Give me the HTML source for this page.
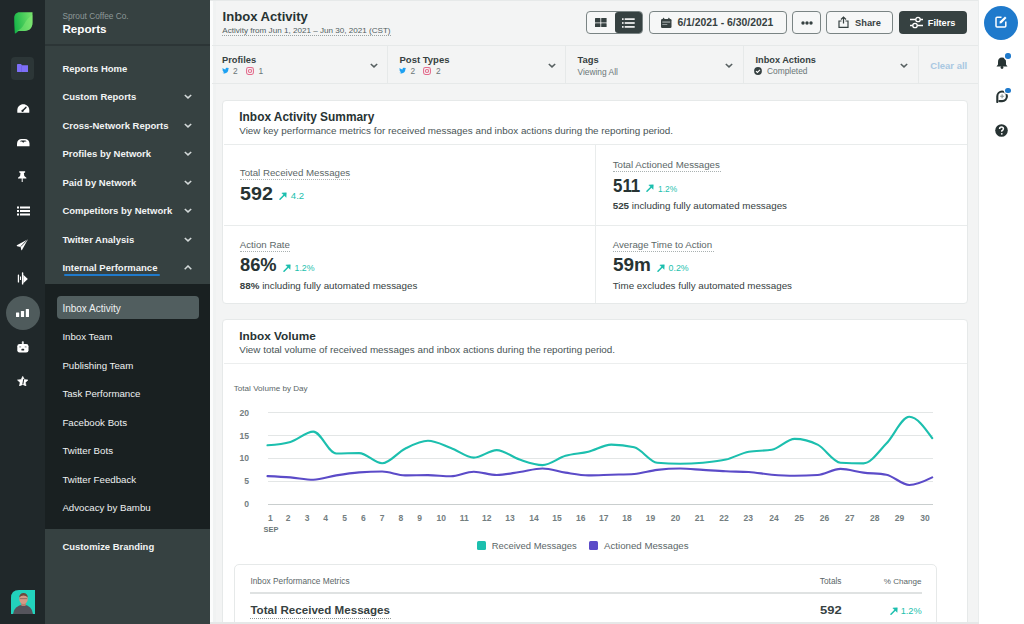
<!DOCTYPE html>
<html><head><meta charset="utf-8"><title>Inbox Activity</title>
<style>
html,body{margin:0;padding:0;width:1024px;height:624px;overflow:hidden;background:#f3f4f4;}
body{position:relative;font-family:"Liberation Sans",sans-serif;}
.t{position:absolute;white-space:nowrap;}
.b{position:absolute;}
b{font-weight:700;}
</style></head><body>
<div class="b" style="left:0px;top:0px;width:45px;height:624px;background:#20282a;"></div>
<div class="b" style="left:45px;top:0px;width:165px;height:624px;background:#364141;"></div>
<div class="b" style="left:45px;top:44px;width:165px;height:1.5px;background:#2c3536;"></div>
<div class="b" style="left:45px;top:284px;width:165px;height:245px;background:#192021;"></div>
<div class="b" style="left:210px;top:0px;width:768px;height:624px;background:#f3f4f4;"></div>
<div class="b" style="left:210px;top:0px;width:2.5px;height:624px;background:#fbfcfc;"></div>
<div class="b" style="left:212.5px;top:0px;width:3.5px;height:624px;background:#f0f2f2;"></div>
<div class="b" style="left:210px;top:0px;width:768px;height:1px;background:#e6e9e9;"></div>
<div class="b" style="left:978px;top:0px;width:46px;height:624px;background:#ffffff;"></div>
<div class="b" style="left:978px;top:0px;width:1px;height:624px;background:#eaeded;"></div>
<svg class="b" style="left:13.5px;top:11.5px;" width="19" height="22" viewBox="0 0 19 22"><defs><linearGradient id="lg" x1="0" y1="0.6" x2="1" y2="0.4"><stop offset="0" stop-color="#16b548"/><stop offset="1" stop-color="#72e06a"/></linearGradient></defs><path d="M0.9 21.6 C0.5 17 0.2 11 0.2 6 C0.2 2.6 2.3 0.3 5.5 0.3 L18.5 0.3 L18.5 10.5 C18.5 15.8 15.5 18.9 10.5 18.9 L4.5 18.9 C3.5 19.8 2.2 21 0.9 21.6 Z" fill="url(#lg)"/><path d="M3 18.9 C8 17 9.5 13 12 9 C14 6 16.5 4 18.5 3 L18.5 10.5 C18.5 15.8 15.5 18.9 10.5 18.9 Z" fill="#8aea78" opacity="0.45"/></svg>
<div class="b" style="left:11.2px;top:57.3px;width:22.500000000000004px;height:22.400000000000006px;background:#2c3637;border-radius:4px;"></div>
<svg class="b" style="left:16.8px;top:63.8px;" width="11.6" height="8.2" viewBox="0 0 11.6 8.2"><path d="M0 0.8 Q0 0 0.8 0 L4 0 L5 1.2 L10.8 1.2 Q11.6 1.2 11.6 2 L11.6 7.4 Q11.6 8.2 10.8 8.2 L0.8 8.2 Q0 8.2 0 7.4 Z" fill="#7d6ff7"/><rect x="4" y="1.6" width="0.7" height="6.6" fill="#5e52d0" opacity="0.5"/></svg>
<svg class="b" style="left:16.5px;top:103.5px;" width="13" height="9" viewBox="0 0 13 9"><path d="M0.3 8.4 L0.3 6.2 C0.3 2.6 3 0.2 6.3 0.2 C9.6 0.2 12.3 2.6 12.3 6.2 L12.3 8.4 Q12.3 8.8 11.9 8.8 L0.7 8.8 Q0.3 8.8 0.3 8.4 Z" fill="#fff"/><path d="M5.6 6.8 L8.9 3.4" stroke="#20282a" stroke-width="1.5" stroke-linecap="round"/><circle cx="5.5" cy="6.9" r="1.1" fill="#20282a"/></svg>
<svg class="b" style="left:16.5px;top:138.5px;" width="13" height="8" viewBox="0 0 13 8"><path d="M0 7.3 L0 4.6 C0 1.8 2 0 4.6 0 L7.9 0 C10.5 0 12.5 1.8 12.5 4.6 L12.5 7.3 Z" fill="#fff"/><path d="M3 2.6 C3.4 1.6 4 1.4 4.8 1.4 L7.7 1.4 C8.5 1.4 9.1 1.6 9.5 2.6 L7.6 2.6 L6.25 3.7 L4.9 2.6 Z" fill="#20282a"/></svg>
<svg class="b" style="left:18.3px;top:170.6px;" width="8.4" height="11.6" viewBox="0 0 10 13"><path d="M1.5 0 L8.5 0 L8.5 1.5 L7 2 L7.5 5.5 L10 7.5 L10 8.5 L0 8.5 L0 7.5 L2.5 5.5 L3 2 L1.5 1.5 Z" fill="#fff"/><rect x="4.4" y="8" width="1.2" height="5" fill="#fff"/></svg>
<svg class="b" style="left:16.5px;top:205.5px;" width="13" height="10" viewBox="0 0 13 10"><g fill="#fff"><rect x="0" y="0.5" width="2" height="2"/><rect x="3" y="0.5" width="10" height="2"/><rect x="0" y="4" width="2" height="2"/><rect x="3" y="4" width="10" height="2"/><rect x="0" y="7.5" width="2" height="2"/><rect x="3" y="7.5" width="10" height="2"/></g></svg>
<svg class="b" style="left:16px;top:237px;" width="13" height="14" viewBox="0 0 13 14"><path d="M12 2.2 L0.8 8.3 Q0.5 9 1.2 9.2 L4.6 9.9 L5.3 13 Q5.5 13.6 6 13 Z" fill="#fff"/><path d="M12 2.2 L4.8 9.6" stroke="#20282a" stroke-width="0.8"/></svg>
<svg class="b" style="left:17px;top:271px;" width="12" height="14" viewBox="0 0 12 14"><g fill="#fff"><rect x="0.8" y="3.4" width="1.3" height="8.1" rx="0.6"/><rect x="3" y="5.5" width="1" height="3.5"/><rect x="4.9" y="1.3" width="1.4" height="12.3" rx="0.6"/><path d="M6.3 3.8 L10.8 8 L6.3 12.2 Z"/></g></svg>
<div class="b" style="left:6px;top:296px;width:34px;height:34px;background:#4f5b5c;border-radius:50%;"></div>
<svg class="b" style="left:16px;top:309px;" width="13" height="8" viewBox="0 0 13 8"><g fill="#fff"><rect x="0" y="3.5" width="3.2" height="4.5" rx="0.5"/><rect x="4.9" y="2" width="3.2" height="6" rx="0.5"/><rect x="9.8" y="0" width="3.2" height="8" rx="0.5"/></g></svg>
<svg class="b" style="left:16px;top:340px;" width="13" height="14" viewBox="0 0 13 14"><rect x="5.8" y="1.2" width="2" height="3.2" rx="0.8" fill="#dfe3e3"/><rect x="1.3" y="3.9" width="11.2" height="8.6" rx="2.3" fill="#fff"/><rect x="3.2" y="6.3" width="2" height="1.3" rx="0.5" fill="#8f9999"/><rect x="8.6" y="6.3" width="2" height="1.3" rx="0.5" fill="#8f9999"/><rect x="5.4" y="8.7" width="2.8" height="1.9" rx="0.6" fill="#20282a"/></svg>
<svg class="b" style="left:16.9px;top:375.8px;" width="11.5" height="10.3" viewBox="0 0 13 12"><path d="M6.5 0.3 L8.4 4 L12.7 4.6 L9.6 7.6 L10.4 11.8 L6.5 9.8 L2.6 11.8 L3.4 7.6 L0.3 4.6 L4.6 4 Z" fill="#fff" stroke="#fff" stroke-width="0.6" stroke-linejoin="round"/><path d="M7.6 3.6 L6.6 9.6" stroke="#20282a" stroke-width="1.2" fill="none"/></svg>
<svg class="b" style="left:10.8px;top:589.5px;" width="24" height="24" viewBox="0 0 24 24"><defs><clipPath id="av"><path d="M0 24 L0 8 Q0 0 8 0 L24 0 L24 24 Z"/></clipPath></defs><g clip-path="url(#av)"><rect width="24" height="24" fill="#22d3bd"/><path d="M2 24 Q3 15.5 12.5 14.5 Q21 15.5 22 24 Z" fill="#55545c"/><path d="M10 13 L15 13 L14.5 16 L10.5 16 Z" fill="#b98070"/><ellipse cx="12.5" cy="8.8" rx="4.3" ry="5.3" fill="#d49a86"/><path d="M8.2 7.5 Q8.5 3 12.5 3 Q16.5 3 16.8 7.5 Q15 5.5 12.5 5.5 Q10 5.5 8.2 7.5 Z" fill="#6b4a3e"/><rect x="8.8" y="8.2" width="7.4" height="0.9" fill="#3a3434" opacity="0.45"/></g></svg>
<div class="t" style="left:62.4px;top:10.600000000000001px;font-size:8.3px;line-height:11px;font-weight:400;color:#8d9898;">Sprout Coffee Co.</div>
<div class="t" style="left:62.4px;top:20.799999999999997px;font-size:11.7px;line-height:16px;font-weight:700;color:#ffffff;">Reports</div>
<div class="t" style="left:62.4px;top:61.8px;font-size:9.5px;line-height:13px;font-weight:700;color:#f2f4f4;">Reports Home</div>
<div class="t" style="left:62.4px;top:90.3px;font-size:9.5px;line-height:13px;font-weight:700;color:#f2f4f4;">Custom Reports</div>
<svg class="b" style="left:184px;top:94.2px;" width="8" height="5" viewBox="0 0 8 5"><path d="M0.8 1 L4 3.9 L7.2 1" stroke="#d3d9d9" stroke-width="1.5" fill="none"/></svg>
<div class="t" style="left:62.4px;top:118.80000000000001px;font-size:9.5px;line-height:13px;font-weight:700;color:#f2f4f4;">Cross-Network Reports</div>
<svg class="b" style="left:184px;top:122.70000000000002px;" width="8" height="5" viewBox="0 0 8 5"><path d="M0.8 1 L4 3.9 L7.2 1" stroke="#d3d9d9" stroke-width="1.5" fill="none"/></svg>
<div class="t" style="left:62.4px;top:147.3px;font-size:9.5px;line-height:13px;font-weight:700;color:#f2f4f4;">Profiles by Network</div>
<svg class="b" style="left:184px;top:151.20000000000002px;" width="8" height="5" viewBox="0 0 8 5"><path d="M0.8 1 L4 3.9 L7.2 1" stroke="#d3d9d9" stroke-width="1.5" fill="none"/></svg>
<div class="t" style="left:62.4px;top:175.8px;font-size:9.5px;line-height:13px;font-weight:700;color:#f2f4f4;">Paid by Network</div>
<svg class="b" style="left:184px;top:179.70000000000002px;" width="8" height="5" viewBox="0 0 8 5"><path d="M0.8 1 L4 3.9 L7.2 1" stroke="#d3d9d9" stroke-width="1.5" fill="none"/></svg>
<div class="t" style="left:62.4px;top:204.3px;font-size:9.5px;line-height:13px;font-weight:700;color:#f2f4f4;">Competitors by Network</div>
<svg class="b" style="left:184px;top:208.20000000000002px;" width="8" height="5" viewBox="0 0 8 5"><path d="M0.8 1 L4 3.9 L7.2 1" stroke="#d3d9d9" stroke-width="1.5" fill="none"/></svg>
<div class="t" style="left:62.4px;top:232.8px;font-size:9.5px;line-height:13px;font-weight:700;color:#f2f4f4;">Twitter Analysis</div>
<svg class="b" style="left:184px;top:236.70000000000002px;" width="8" height="5" viewBox="0 0 8 5"><path d="M0.8 1 L4 3.9 L7.2 1" stroke="#d3d9d9" stroke-width="1.5" fill="none"/></svg>
<div class="t" style="left:62.4px;top:261.0px;font-size:9.5px;line-height:13px;font-weight:700;color:#f2f4f4;">Internal Performance</div>
<svg class="b" style="left:184px;top:265.0px;" width="8" height="5" viewBox="0 0 8 5"><path d="M0.7 4.3 L4 1 L7.3 4.3" stroke="#d3d9d9" stroke-width="1.5" fill="none"/></svg>
<div class="b" style="left:63.5px;top:274.4px;width:96.5px;height:2.0px;background:#1f7acc;border-radius:1px;"></div>
<div class="b" style="left:57px;top:296px;width:142px;height:22.5px;background:#515e5f;border-radius:4px;"></div>
<div class="t" style="left:62.4px;top:301.5px;font-size:10.0px;line-height:13px;font-weight:400;color:#eef1f1;">Inbox Activity</div>
<div class="t" style="left:62.4px;top:330.0px;font-size:9.7px;line-height:13px;font-weight:400;color:#eef1f1;">Inbox Team</div>
<div class="t" style="left:62.4px;top:358.5px;font-size:9.7px;line-height:13px;font-weight:400;color:#eef1f1;">Publishing Team</div>
<div class="t" style="left:62.4px;top:387.0px;font-size:9.7px;line-height:13px;font-weight:400;color:#eef1f1;">Task Performance</div>
<div class="t" style="left:62.4px;top:415.5px;font-size:9.7px;line-height:13px;font-weight:400;color:#eef1f1;">Facebook Bots</div>
<div class="t" style="left:62.4px;top:444.0px;font-size:9.7px;line-height:13px;font-weight:400;color:#eef1f1;">Twitter Bots</div>
<div class="t" style="left:62.4px;top:472.5px;font-size:9.7px;line-height:13px;font-weight:400;color:#eef1f1;">Twitter Feedback</div>
<div class="t" style="left:62.4px;top:501.0px;font-size:9.7px;line-height:13px;font-weight:400;color:#eef1f1;">Advocacy by Bambu</div>
<div class="t" style="left:62.4px;top:539.8px;font-size:9.45px;line-height:13px;font-weight:700;color:#f2f4f4;">Customize Branding</div>
<div class="t" style="left:222.5px;top:8.100000000000001px;font-size:13.1px;line-height:18px;font-weight:700;color:#273333;">Inbox Activity</div>
<div class="t" style="left:222.3px;top:24.799999999999997px;font-size:8.1px;line-height:11px;font-weight:400;color:#515e5f;">Activity from Jun 1, 2021 – Jun 30, 2021 (CST)</div>
<div class="b" style="left:222px;top:35px;width:169px;height:0;border-top:1px dotted #9aa3a3;"></div>
<div class="b" style="left:586px;top:11px;width:57.299999999999955px;height:22.799999999999997px;border:1.2px solid #7a8484;border-radius:4px;background:#f6f7f7;box-sizing:border-box;"></div>
<div class="b" style="left:615.3px;top:12px;width:27.0px;height:20.799999999999997px;background:#364141;border-radius:3px;"></div>
<svg class="b" style="left:595px;top:17.6px;" width="11.6" height="9.8" viewBox="0 0 11.6 9.8"><g fill="#364141"><rect x="0" y="0" width="5.4" height="4.5" rx="0.5"/><rect x="6.2" y="0" width="5.4" height="4.5" rx="0.5"/><rect x="0" y="5.3" width="5.4" height="4.5" rx="0.5"/><rect x="6.2" y="5.3" width="5.4" height="4.5" rx="0.5"/></g></svg>
<svg class="b" style="left:622px;top:17.5px;" width="13" height="10" viewBox="0 0 13 10"><g fill="#fff"><rect x="0" y="0.3" width="1.6" height="1.6"/><rect x="2.7" y="0.3" width="10" height="1.6"/><rect x="0" y="4.2" width="1.6" height="1.6"/><rect x="2.7" y="4.2" width="10" height="1.6"/><rect x="0" y="8.1" width="1.6" height="1.6"/><rect x="2.7" y="8.1" width="10" height="1.6"/></g></svg>
<div class="b" style="left:649.3px;top:11px;width:137.30000000000007px;height:22.799999999999997px;border:1.2px solid #7a8484;border-radius:4px;background:#f6f7f7;box-sizing:border-box;"></div>
<svg class="b" style="left:661px;top:16.8px;" width="10.5" height="11" viewBox="0 0 10.5 11"><rect x="0" y="2" width="10.5" height="9" rx="1.2" fill="#364141"/><path d="M1.2 2.5 L2.6 0.5 L4 2.5 Z M6.5 2.5 L7.9 0.5 L9.3 2.5 Z" fill="#364141"/><rect x="1.3" y="4.6" width="7.9" height="0.9" fill="#c9cfcf"/><rect x="1.3" y="7" width="5" height="0.9" fill="#9aa3a3"/></svg>
<div class="t" style="left:677.4px;top:16.1px;font-size:10.4px;line-height:14px;font-weight:700;color:#364141;">6/1/2021 - 6/30/2021</div>
<div class="b" style="left:792.2px;top:11px;width:28.59999999999991px;height:22.799999999999997px;border:1.2px solid #7a8484;border-radius:4px;background:#f6f7f7;box-sizing:border-box;"></div>
<svg class="b" style="left:800.5px;top:20.5px;" width="12" height="4" viewBox="0 0 12 4"><g fill="#364141"><circle cx="2" cy="2" r="1.7"/><circle cx="6" cy="2" r="1.7"/><circle cx="10" cy="2" r="1.7"/></g></svg>
<div class="b" style="left:826px;top:11px;width:67.39999999999998px;height:22.799999999999997px;border:1.2px solid #7a8484;border-radius:4px;background:#f6f7f7;box-sizing:border-box;"></div>
<svg class="b" style="left:838px;top:15.5px;" width="11" height="12" viewBox="0 0 11 12"><path d="M5.5 7.5 L5.5 1.2 M3 3.5 L5.5 1 L8 3.5" stroke="#364141" stroke-width="1.2" fill="none"/><path d="M3.5 5 L1 5 L1 11.3 L10 11.3 L10 5 L7.5 5" stroke="#364141" stroke-width="1.2" fill="none"/></svg>
<div class="t" style="left:855px;top:17.1px;font-size:9.3px;line-height:13px;font-weight:700;color:#364141;">Share</div>
<div class="b" style="left:898.6px;top:11px;width:68.69999999999993px;height:22.799999999999997px;background:#364141;border-radius:4px;"></div>
<svg class="b" style="left:910px;top:15.5px;" width="13" height="13" viewBox="0 0 13 13"><g stroke="#fff" stroke-width="1.3" fill="none"><path d="M0 3.5 L13 3.5 M0 9.5 L13 9.5"/><circle cx="8" cy="3.5" r="2.2" fill="#364141"/><circle cx="5" cy="9.5" r="2.2" fill="#364141"/></g></svg>
<div class="t" style="left:927.8px;top:17.1px;font-size:9.2px;line-height:12px;font-weight:700;color:#ffffff;">Filters</div>
<div class="b" style="left:212px;top:44.6px;width:766px;height:1.0px;background:#e6e9e9;"></div>
<div class="b" style="left:212px;top:83.4px;width:766px;height:1.0px;background:#e6e9e9;"></div>
<div class="b" style="left:387.3px;top:45.6px;width:1.0px;height:37.800000000000004px;background:#e6e9e9;"></div>
<div class="b" style="left:565px;top:45.6px;width:1px;height:37.800000000000004px;background:#e6e9e9;"></div>
<div class="b" style="left:743px;top:45.6px;width:1px;height:37.800000000000004px;background:#e6e9e9;"></div>
<div class="b" style="left:918px;top:45.6px;width:1px;height:37.800000000000004px;background:#e6e9e9;"></div>
<div class="t" style="left:222px;top:53.8px;font-size:9.3px;line-height:13px;font-weight:700;color:#364141;">Profiles</div>
<svg class="b" style="left:221.5px;top:67px;" width="7.5" height="7" viewBox="0 0 8.5 8"><path d="M8 1.6c-.3.1-.6.2-.9.2.3-.2.6-.5.7-.9-.3.2-.6.3-1 .4C6.5 1 6.1.8 5.6.8c-.9 0-1.6.7-1.6 1.6 0 .1 0 .3 0 .4C2.7 2.7 1.5 2.1.7 1.1.6 1.4.5 1.7.5 2c0 .6.3 1.1.7 1.3-.3 0-.5-.1-.7-.2 0 .8.6 1.4 1.3 1.6-.1 0-.3.1-.4.1-.1 0-.2 0-.3 0 .2.6.8 1.1 1.5 1.1-.6.4-1.2.7-2 .7H.3c.7.4 1.5.7 2.4.7 2.9 0 4.5-2.4 4.5-4.5v-.2c.3-.2.6-.5.8-.8z" fill="#1da1f2"/></svg>
<div class="t" style="left:233px;top:66.3px;font-size:8.4px;line-height:11px;font-weight:400;color:#6a7677;">2</div>
<svg class="b" style="left:245.5px;top:66.6px;" width="8" height="8" viewBox="0 0 8.5 8.5"><rect x="0.6" y="0.6" width="7.3" height="7.3" rx="2" stroke="#e46a8b" stroke-width="1.1" fill="none"/><circle cx="4.25" cy="4.25" r="1.7" stroke="#e46a8b" stroke-width="1.1" fill="none"/><circle cx="6.3" cy="2.2" r="0.5" fill="#e46a8b"/></svg>
<div class="t" style="left:258.5px;top:66.3px;font-size:8.4px;line-height:11px;font-weight:400;color:#6a7677;">1</div>
<svg class="b" style="left:369.8px;top:63.3px;" width="8" height="5" viewBox="0 0 8 5"><path d="M0.8 1 L4 3.9 L7.2 1" stroke="#565f60" stroke-width="1.5" fill="none"/></svg>
<div class="t" style="left:399.5px;top:52.8px;font-size:9.5px;line-height:13px;font-weight:700;color:#364141;">Post Types</div>
<svg class="b" style="left:399.0px;top:67px;" width="7.5" height="7" viewBox="0 0 8.5 8"><path d="M8 1.6c-.3.1-.6.2-.9.2.3-.2.6-.5.7-.9-.3.2-.6.3-1 .4C6.5 1 6.1.8 5.6.8c-.9 0-1.6.7-1.6 1.6 0 .1 0 .3 0 .4C2.7 2.7 1.5 2.1.7 1.1.6 1.4.5 1.7.5 2c0 .6.3 1.1.7 1.3-.3 0-.5-.1-.7-.2 0 .8.6 1.4 1.3 1.6-.1 0-.3.1-.4.1-.1 0-.2 0-.3 0 .2.6.8 1.1 1.5 1.1-.6.4-1.2.7-2 .7H.3c.7.4 1.5.7 2.4.7 2.9 0 4.5-2.4 4.5-4.5v-.2c.3-.2.6-.5.8-.8z" fill="#1da1f2"/></svg>
<div class="t" style="left:410.5px;top:66.3px;font-size:8.4px;line-height:11px;font-weight:400;color:#6a7677;">2</div>
<svg class="b" style="left:423.0px;top:66.6px;" width="8" height="8" viewBox="0 0 8.5 8.5"><rect x="0.6" y="0.6" width="7.3" height="7.3" rx="2" stroke="#e46a8b" stroke-width="1.1" fill="none"/><circle cx="4.25" cy="4.25" r="1.7" stroke="#e46a8b" stroke-width="1.1" fill="none"/><circle cx="6.3" cy="2.2" r="0.5" fill="#e46a8b"/></svg>
<div class="t" style="left:436.0px;top:66.3px;font-size:8.4px;line-height:11px;font-weight:400;color:#6a7677;">2</div>
<svg class="b" style="left:547.8px;top:63.3px;" width="8" height="5" viewBox="0 0 8 5"><path d="M0.8 1 L4 3.9 L7.2 1" stroke="#565f60" stroke-width="1.5" fill="none"/></svg>
<div class="t" style="left:577.5px;top:52.8px;font-size:9.4px;line-height:13px;font-weight:700;color:#364141;">Tags</div>
<div class="t" style="left:577.5px;top:67.0px;font-size:8.4px;line-height:11px;font-weight:400;color:#6a7677;">Viewing All</div>
<svg class="b" style="left:725.3px;top:63.3px;" width="8" height="5" viewBox="0 0 8 5"><path d="M0.8 1 L4 3.9 L7.2 1" stroke="#565f60" stroke-width="1.5" fill="none"/></svg>
<div class="t" style="left:755.5px;top:53.8px;font-size:9.2px;line-height:12px;font-weight:700;color:#364141;">Inbox Actions</div>
<svg class="b" style="left:754.2px;top:67.4px;" width="8" height="8" viewBox="0 0 8 8"><circle cx="4" cy="4" r="3.9" fill="#364141"/><path d="M2 4.1 L3.4 5.5 L6 2.8" stroke="#fff" stroke-width="1.1" fill="none"/></svg>
<div class="t" style="left:767px;top:66.0px;font-size:8.4px;line-height:11px;font-weight:400;color:#6a7677;">Completed</div>
<svg class="b" style="left:899.8px;top:63.3px;" width="8" height="5" viewBox="0 0 8 5"><path d="M0.8 1 L4 3.9 L7.2 1" stroke="#565f60" stroke-width="1.5" fill="none"/></svg>
<div class="t" style="left:930.3px;top:58.5px;font-size:9.5px;line-height:13px;font-weight:700;color:#a9c8e2;">Clear all</div>
<div class="b" style="left:221.8px;top:99.8px;width:746.2px;height:204.39999999999998px;background:#fff;border:1.3px solid #e6e9e9;border-radius:4px;box-sizing:border-box;"></div>
<div class="t" style="left:239.3px;top:108.7px;font-size:11.9px;line-height:16px;font-weight:700;color:#273333;">Inbox Activity Summary</div>
<div class="t" style="left:239.3px;top:124px;font-size:9.85px;line-height:13px;font-weight:400;color:#485455;">View key performance metrics for received messages and inbox actions during the reporting period.</div>
<div class="b" style="left:223.5px;top:144px;width:743.0px;height:1px;background:#e9ecec;"></div>
<div class="b" style="left:223.5px;top:224.8px;width:743.0px;height:1.0px;background:#e9ecec;"></div>
<div class="b" style="left:595px;top:145px;width:1px;height:158px;background:#e9ecec;"></div>
<div class="t" style="left:239.8px;top:166.1px;font-size:9.7px;line-height:13px;font-weight:400;color:#5b6768;">Total Received Messages</div>
<div class="b" style="left:239.8px;top:179.2px;width:110px;height:0;border-top:1px dotted #a9b1b1;"></div>
<div class="t" style="left:239.8px;top:182.5px;font-size:17.6px;line-height:23px;font-weight:700;color:#273333;transform:scaleX(1.12);transform-origin:left center;">592</div>
<svg class="b" style="left:278.8px;top:191.9px;" width="8" height="8" viewBox="0 0 8 8"><path d="M1 7.2 L5.2 3" stroke="#1cbfae" stroke-width="1.5" stroke-linecap="round" fill="none"/><path d="M2.8 1 L7.3 0.8 L7.1 5.3 Z" fill="#1cbfae" stroke="#1cbfae" stroke-width="0.5" stroke-linejoin="round"/></svg>
<div class="t" style="left:290.8px;top:189.2px;font-size:9.6px;line-height:13px;font-weight:400;color:#1cbfae;">4.2</div>
<div class="t" style="left:612.7px;top:158.3px;font-size:9.7px;line-height:13px;font-weight:400;color:#5b6768;">Total Actioned Messages</div>
<div class="b" style="left:612.7px;top:171.4px;width:108px;height:0;border-top:1px dotted #a9b1b1;"></div>
<div class="t" style="left:612.7px;top:174.8px;font-size:17.6px;line-height:23px;font-weight:700;color:#273333;transform:scaleX(0.96);transform-origin:left center;">511</div>
<svg class="b" style="left:646.0px;top:184.20000000000002px;" width="8" height="8" viewBox="0 0 8 8"><path d="M1 7.2 L5.2 3" stroke="#1cbfae" stroke-width="1.5" stroke-linecap="round" fill="none"/><path d="M2.8 1 L7.3 0.8 L7.1 5.3 Z" fill="#1cbfae" stroke="#1cbfae" stroke-width="0.5" stroke-linejoin="round"/></svg>
<div class="t" style="left:658.0px;top:183.5px;font-size:8.4px;line-height:11px;font-weight:400;color:#1cbfae;">1.2%</div>
<div class="t" style="left:612.7px;top:199.0px;font-size:9.8px;line-height:13px;font-weight:400;color:#364141;"><b>525</b> including fully automated messages</div>
<div class="t" style="left:239.8px;top:237.9px;font-size:9.7px;line-height:13px;font-weight:400;color:#5b6768;">Action Rate</div>
<div class="b" style="left:239.8px;top:251.0px;width:50px;height:0;border-top:1px dotted #a9b1b1;"></div>
<div class="t" style="left:239.8px;top:254.3px;font-size:17.6px;line-height:23px;font-weight:700;color:#273333;transform:scaleX(1.04);transform-origin:left center;">86%</div>
<svg class="b" style="left:282.5px;top:263.7px;" width="8" height="8" viewBox="0 0 8 8"><path d="M1 7.2 L5.2 3" stroke="#1cbfae" stroke-width="1.5" stroke-linecap="round" fill="none"/><path d="M2.8 1 L7.3 0.8 L7.1 5.3 Z" fill="#1cbfae" stroke="#1cbfae" stroke-width="0.5" stroke-linejoin="round"/></svg>
<div class="t" style="left:294.5px;top:262.0px;font-size:8.8px;line-height:12px;font-weight:400;color:#1cbfae;">1.2%</div>
<div class="t" style="left:239.8px;top:278.5px;font-size:9.8px;line-height:13px;font-weight:400;color:#364141;"><b>88%</b> including fully automated messages</div>
<div class="t" style="left:612.7px;top:237.9px;font-size:9.7px;line-height:13px;font-weight:400;color:#5b6768;">Average Time to Action</div>
<div class="b" style="left:612.7px;top:251.0px;width:101px;height:0;border-top:1px dotted #a9b1b1;"></div>
<div class="t" style="left:612.7px;top:254.3px;font-size:17.6px;line-height:23px;font-weight:700;color:#273333;transform:scaleX(1.077);transform-origin:left center;">59m</div>
<svg class="b" style="left:656.6px;top:263.7px;" width="8" height="8" viewBox="0 0 8 8"><path d="M1 7.2 L5.2 3" stroke="#1cbfae" stroke-width="1.5" stroke-linecap="round" fill="none"/><path d="M2.8 1 L7.3 0.8 L7.1 5.3 Z" fill="#1cbfae" stroke="#1cbfae" stroke-width="0.5" stroke-linejoin="round"/></svg>
<div class="t" style="left:668.6px;top:262.0px;font-size:8.8px;line-height:12px;font-weight:400;color:#1cbfae;">0.2%</div>
<div class="t" style="left:612.7px;top:278.5px;font-size:9.8px;line-height:13px;font-weight:400;color:#364141;">Time excludes fully automated messages</div>
<div class="b" style="left:221.8px;top:319.2px;width:746.2px;height:320.8px;background:#fff;border:1.3px solid #e6e9e9;border-radius:4px;box-sizing:border-box;"></div>
<div class="t" style="left:239.3px;top:327.6px;font-size:11.8px;line-height:16px;font-weight:700;color:#273333;">Inbox Volume</div>
<div class="t" style="left:239.3px;top:343.1px;font-size:9.85px;line-height:13px;font-weight:400;color:#485455;">View total volume of received messages and inbox actions during the reporting period.</div>
<div class="b" style="left:223.5px;top:363.2px;width:743.0px;height:1.3000000000000114px;background:#eceeee;"></div>
<div class="t" style="left:233.8px;top:382.8px;font-size:8.1px;line-height:11px;font-weight:400;color:#5b6768;">Total Volume by Day</div>
<div class="b" style="left:267.5px;top:412.29999999999995px;width:665.5px;height:1.2000000000000455px;background:#e3e6e6;"></div>
<div class="b" style="left:267.5px;top:434.9px;width:665.5px;height:1.2000000000000455px;background:#e3e6e6;"></div>
<div class="b" style="left:267.5px;top:457.7px;width:665.5px;height:1.2000000000000455px;background:#e3e6e6;"></div>
<div class="b" style="left:267.5px;top:480.59999999999997px;width:665.5px;height:1.2000000000000455px;background:#e3e6e6;"></div>
<div class="b" style="left:267.5px;top:503.59999999999997px;width:665.5px;height:1.2000000000000455px;background:#c9cece;"></div>
<div class="t" style="right:775.0px;top:406.9px;font-size:8.6px;line-height:12px;font-weight:700;color:#737e7f;text-align:right;">20</div>
<div class="t" style="right:775.0px;top:429.5px;font-size:8.6px;line-height:12px;font-weight:700;color:#737e7f;text-align:right;">15</div>
<div class="t" style="right:775.0px;top:452.3px;font-size:8.6px;line-height:12px;font-weight:700;color:#737e7f;text-align:right;">10</div>
<div class="t" style="right:775.0px;top:475.2px;font-size:8.6px;line-height:12px;font-weight:700;color:#737e7f;text-align:right;">5</div>
<div class="t" style="right:775.0px;top:498.2px;font-size:8.6px;line-height:12px;font-weight:700;color:#737e7f;text-align:right;">0</div>
<div class="t" style="left:255.39999999999998px;width:30px;top:512.0px;font-size:8.5px;line-height:12px;font-weight:700;color:#737e7f;text-align:center;">1</div>
<div class="t" style="left:273.2px;width:30px;top:512.0px;font-size:8.5px;line-height:12px;font-weight:700;color:#737e7f;text-align:center;">2</div>
<div class="t" style="left:292.0px;width:30px;top:512.0px;font-size:8.5px;line-height:12px;font-weight:700;color:#737e7f;text-align:center;">3</div>
<div class="t" style="left:310.7px;width:30px;top:512.0px;font-size:8.5px;line-height:12px;font-weight:700;color:#737e7f;text-align:center;">4</div>
<div class="t" style="left:329.5px;width:30px;top:512.0px;font-size:8.5px;line-height:12px;font-weight:700;color:#737e7f;text-align:center;">5</div>
<div class="t" style="left:348.3px;width:30px;top:512.0px;font-size:8.5px;line-height:12px;font-weight:700;color:#737e7f;text-align:center;">6</div>
<div class="t" style="left:367.1px;width:30px;top:512.0px;font-size:8.5px;line-height:12px;font-weight:700;color:#737e7f;text-align:center;">7</div>
<div class="t" style="left:385.9px;width:30px;top:512.0px;font-size:8.5px;line-height:12px;font-weight:700;color:#737e7f;text-align:center;">8</div>
<div class="t" style="left:404.7px;width:30px;top:512.0px;font-size:8.5px;line-height:12px;font-weight:700;color:#737e7f;text-align:center;">9</div>
<div class="t" style="left:426.3px;width:30px;top:512.0px;font-size:8.5px;line-height:12px;font-weight:700;color:#737e7f;text-align:center;">10</div>
<div class="t" style="left:449.2px;width:30px;top:512.0px;font-size:8.5px;line-height:12px;font-weight:700;color:#737e7f;text-align:center;">11</div>
<div class="t" style="left:471.7px;width:30px;top:512.0px;font-size:8.5px;line-height:12px;font-weight:700;color:#737e7f;text-align:center;">12</div>
<div class="t" style="left:495.0px;width:30px;top:512.0px;font-size:8.5px;line-height:12px;font-weight:700;color:#737e7f;text-align:center;">13</div>
<div class="t" style="left:518.9px;width:30px;top:512.0px;font-size:8.5px;line-height:12px;font-weight:700;color:#737e7f;text-align:center;">14</div>
<div class="t" style="left:542.1px;width:30px;top:512.0px;font-size:8.5px;line-height:12px;font-weight:700;color:#737e7f;text-align:center;">15</div>
<div class="t" style="left:565.7px;width:30px;top:512.0px;font-size:8.5px;line-height:12px;font-weight:700;color:#737e7f;text-align:center;">16</div>
<div class="t" style="left:588.7px;width:30px;top:512.0px;font-size:8.5px;line-height:12px;font-weight:700;color:#737e7f;text-align:center;">17</div>
<div class="t" style="left:611.9px;width:30px;top:512.0px;font-size:8.5px;line-height:12px;font-weight:700;color:#737e7f;text-align:center;">18</div>
<div class="t" style="left:635.5px;width:30px;top:512.0px;font-size:8.5px;line-height:12px;font-weight:700;color:#737e7f;text-align:center;">19</div>
<div class="t" style="left:660.4px;width:30px;top:512.0px;font-size:8.5px;line-height:12px;font-weight:700;color:#737e7f;text-align:center;">20</div>
<div class="t" style="left:684.4px;width:30px;top:512.0px;font-size:8.5px;line-height:12px;font-weight:700;color:#737e7f;text-align:center;">21</div>
<div class="t" style="left:709.0px;width:30px;top:512.0px;font-size:8.5px;line-height:12px;font-weight:700;color:#737e7f;text-align:center;">22</div>
<div class="t" style="left:733.2px;width:30px;top:512.0px;font-size:8.5px;line-height:12px;font-weight:700;color:#737e7f;text-align:center;">23</div>
<div class="t" style="left:758.9px;width:30px;top:512.0px;font-size:8.5px;line-height:12px;font-weight:700;color:#737e7f;text-align:center;">24</div>
<div class="t" style="left:784.2px;width:30px;top:512.0px;font-size:8.5px;line-height:12px;font-weight:700;color:#737e7f;text-align:center;">25</div>
<div class="t" style="left:809.5px;width:30px;top:512.0px;font-size:8.5px;line-height:12px;font-weight:700;color:#737e7f;text-align:center;">26</div>
<div class="t" style="left:834.7px;width:30px;top:512.0px;font-size:8.5px;line-height:12px;font-weight:700;color:#737e7f;text-align:center;">27</div>
<div class="t" style="left:859.7px;width:30px;top:512.0px;font-size:8.5px;line-height:12px;font-weight:700;color:#737e7f;text-align:center;">28</div>
<div class="t" style="left:884.6px;width:30px;top:512.0px;font-size:8.5px;line-height:12px;font-weight:700;color:#737e7f;text-align:center;">29</div>
<div class="t" style="left:909.9px;width:30px;top:512.0px;font-size:8.5px;line-height:12px;font-weight:700;color:#737e7f;text-align:center;">30</div>
<div class="t" style="left:263.6px;top:524.8px;font-size:7.4px;line-height:10px;font-weight:700;color:#6a7677;">SEP</div>
<svg class="b" style="left:0px;top:0px;pointer-events:none;" width="1024" height="624" viewBox="0 0 1024 624"><path d="M267.50 445.30 C275.14 444.73 282.78 444.17 290.42 441.90 C298.06 439.63 305.70 431.60 313.34 431.60 C320.98 431.60 328.62 453.50 336.26 453.50 C343.90 453.50 351.54 453.10 359.18 453.10 C366.82 453.10 374.46 463.30 382.10 463.30 C389.74 463.30 397.38 452.45 405.02 448.70 C412.66 444.95 420.30 440.80 427.94 440.80 C435.59 440.80 443.23 445.20 450.87 448.00 C458.51 450.80 466.15 457.60 473.79 457.60 C481.43 457.60 489.07 450.10 496.71 450.10 C504.35 450.10 511.99 457.10 519.63 459.60 C527.27 462.10 534.91 465.10 542.55 465.10 C550.19 465.10 557.83 458.03 565.47 455.80 C573.11 453.57 580.75 453.57 588.39 451.70 C596.03 449.83 603.67 444.60 611.31 444.60 C618.95 444.60 626.59 445.50 634.23 447.30 C641.87 449.10 649.51 461.97 657.15 462.70 C664.79 463.43 672.43 463.80 680.07 463.80 C687.71 463.80 695.35 463.40 702.99 462.70 C710.63 462.00 718.27 461.43 725.91 459.60 C733.55 457.77 741.19 452.97 748.83 451.70 C756.47 450.43 764.11 451.07 771.76 449.80 C779.40 448.53 787.04 438.90 794.68 438.90 C802.32 438.90 809.96 440.80 817.60 444.60 C825.24 448.40 832.88 462.23 840.52 462.70 C848.16 463.17 855.80 463.40 863.44 463.40 C871.08 463.40 878.72 451.37 886.36 443.60 C894.00 435.83 901.64 416.80 909.28 416.80 C916.92 416.80 924.56 427.50 932.20 438.20" stroke="#1cbfae" stroke-width="2.1" fill="none" stroke-linecap="round"/><path d="M267.50 476.10 C275.14 476.45 282.78 476.80 290.42 477.40 C298.06 478.00 305.70 479.70 313.34 479.70 C320.98 479.70 328.62 476.62 336.26 475.40 C343.90 474.18 351.54 473.00 359.18 472.40 C366.82 471.80 374.46 471.50 382.10 471.50 C389.74 471.50 397.38 475.40 405.02 475.40 C412.66 475.40 420.30 475.10 427.94 475.10 C435.59 475.10 443.23 476.30 450.87 476.30 C458.51 476.30 466.15 471.70 473.79 471.70 C481.43 471.70 489.07 475.00 496.71 475.00 C504.35 475.00 511.99 473.08 519.63 472.00 C527.27 470.92 534.91 468.50 542.55 468.50 C550.19 468.50 557.83 471.45 565.47 472.60 C573.11 473.75 580.75 475.40 588.39 475.40 C596.03 475.40 603.67 474.93 611.31 474.70 C618.95 474.47 626.59 474.47 634.23 474.00 C641.87 473.53 649.51 470.82 657.15 469.90 C664.79 468.98 672.43 468.50 680.07 468.50 C687.71 468.50 695.35 469.43 702.99 469.90 C710.63 470.37 718.27 470.95 725.91 471.30 C733.55 471.65 741.19 471.53 748.83 472.00 C756.47 472.47 764.11 474.07 771.76 474.70 C779.40 475.33 787.04 475.80 794.68 475.80 C802.32 475.80 809.96 475.53 817.60 475.00 C825.24 474.47 832.88 468.90 840.52 468.90 C848.16 468.90 855.80 471.63 863.44 472.60 C871.08 473.57 878.72 473.30 886.36 474.70 C894.00 476.10 901.64 485.00 909.28 485.00 C916.92 485.00 924.56 481.20 932.20 477.40" stroke="#5b4bc8" stroke-width="2.1" fill="none" stroke-linecap="round"/></svg>
<div class="b" style="left:477px;top:541px;width:9px;height:9px;background:#1cbfae;border-radius:1.5px;"></div>
<div class="t" style="left:491.7px;top:539.2px;font-size:9.45px;line-height:13px;font-weight:400;color:#5b6768;">Received Messages</div>
<div class="b" style="left:589.3px;top:541px;width:9.0px;height:9px;background:#5b4bc8;border-radius:1.5px;"></div>
<div class="t" style="left:604px;top:539.2px;font-size:9.7px;line-height:13px;font-weight:400;color:#5b6768;">Actioned Messages</div>
<div class="b" style="left:233.8px;top:564.4px;width:703.5999999999999px;height:75.60000000000002px;background:#fff;border:1px solid #e6e9e9;border-radius:5px;box-sizing:border-box;"></div>
<div class="t" style="left:250.4px;top:576.3px;font-size:8.3px;line-height:11px;font-weight:400;color:#5b6768;">Inbox Performance Metrics</div>
<div class="t" style="right:182.5px;top:576.3px;font-size:8.3px;line-height:11px;font-weight:400;color:#5b6768;text-align:right;">Totals</div>
<div class="t" style="right:102.39999999999998px;top:576.3px;font-size:8.1px;line-height:11px;font-weight:400;color:#5b6768;text-align:right;">% Change</div>
<div class="b" style="left:250.4px;top:592.3px;width:671.2px;height:1.8000000000000682px;background:#dfe2e2;"></div>
<div class="t" style="left:250.4px;top:602.2px;font-size:11.6px;line-height:16px;font-weight:700;color:#364141;">Total Received Messages</div>
<div class="b" style="left:250.4px;top:617.6px;width:140.5px;height:0;border-top:1px dotted #8e9898;"></div>
<div class="t" style="right:182.5px;top:602.2px;font-size:11.8px;line-height:16px;font-weight:700;color:#364141;text-align:right;transform:scaleX(1.1);transform-origin:right center;">592</div>
<svg class="b" style="left:889.8px;top:606.6px;" width="8" height="8" viewBox="0 0 8 8"><path d="M1 7.2 L5.2 3" stroke="#1cbfae" stroke-width="1.5" stroke-linecap="round" fill="none"/><path d="M2.8 1 L7.3 0.8 L7.1 5.3 Z" fill="#1cbfae" stroke="#1cbfae" stroke-width="0.5" stroke-linejoin="round"/></svg>
<div class="t" style="right:102.39999999999998px;top:605.2px;font-size:9.2px;line-height:12px;font-weight:400;color:#1cbfae;text-align:right;">1.2%</div>
<div class="b" style="left:210px;top:622px;width:769px;height:2px;background:#e6e8e8;"></div>
<div class="b" style="left:984.2px;top:5.6px;width:34.0px;height:34.0px;background:#1f7acc;border-radius:50%;"></div>
<svg class="b" style="left:995px;top:16.3px;" width="12" height="12" viewBox="0 0 12 12"><path d="M6.5 1.2 L2 1.2 Q1 1.2 1 2.2 L1 10 Q1 11 2 11 L9.8 11 Q10.8 11 10.8 10 L10.8 5.5" stroke="#fff" stroke-width="1.5" fill="none"/><path d="M4.5 7.5 L4.8 5.6 L10 0.5 L11.5 2 L6.4 7.2 Z" fill="#fff"/></svg>
<svg class="b" style="left:995.5px;top:56px;" width="12" height="13" viewBox="0 0 12 13"><path d="M6 1.5 Q2 1.5 2 6 L2 8.5 L0.5 10.5 L11.5 10.5 L10 8.5 L10 6 Q10 1.5 6 1.5 Z" fill="#273333"/><circle cx="6" cy="11.5" r="1.4" fill="#273333"/></svg>
<div class="b" style="left:1005.2px;top:53.4px;width:5.399999999999977px;height:5.399999999999999px;background:#1f7acc;border-radius:50%;box-shadow:0 0 0 1.2px #fff;"></div>
<svg class="b" style="left:995px;top:90px;" width="13" height="13" viewBox="0 0 13 13"><path d="M2.3 12 L2.3 6.3 A4.8 4.8 0 1 1 7.1 11.1 L4.5 11.1" stroke="#273333" stroke-width="2.1" fill="none" stroke-linecap="round"/><path d="M7.1 4.2 L7.1 8.2 M5.1 6.2 L9.1 6.2" stroke="#8c9696" stroke-width="1.1"/></svg>
<div class="b" style="left:1005.2px;top:87.8px;width:5.399999999999977px;height:5.400000000000006px;background:#1f7acc;border-radius:50%;box-shadow:0 0 0 1.2px #fff;"></div>
<svg class="b" style="left:995px;top:124px;" width="13" height="13" viewBox="0 0 13 13"><circle cx="6.5" cy="6.5" r="6.3" fill="#273333"/><path d="M4.6 5 Q4.6 3 6.5 3 Q8.4 3 8.4 4.8 Q8.4 6 6.8 6.8 L6.8 7.8" stroke="#fff" stroke-width="1.5" fill="none"/><circle cx="6.8" cy="9.8" r="0.9" fill="#fff"/></svg>
</body></html>
